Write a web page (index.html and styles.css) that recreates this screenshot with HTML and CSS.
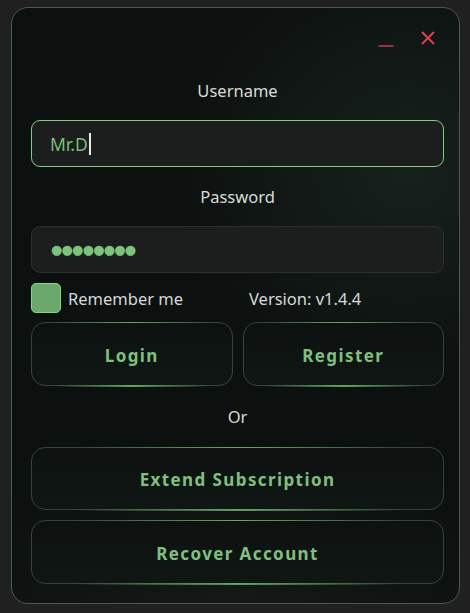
FILE: index.html
```html
<!DOCTYPE html>
<html>
<head>
<meta charset="utf-8">
<link rel="stylesheet" href="styles.css">
</head>
<body>
<div class="window">
  <div class="titlebar">
    <svg class="icon-min" width="16" height="16" viewBox="0 0 16 16"><line x1="0.5" y1="15" x2="15.5" y2="15" stroke="#b43a4a" stroke-width="1.6"/></svg>
    <svg class="icon-close" width="14" height="14" viewBox="0 0 14 14"><path d="M1 1 L13 13 M13 1 L1 13" stroke="#d83c50" stroke-width="2.2" stroke-linecap="butt"/></svg>
  </div>
  <div class="label">Username</div>
  <div class="input focused"><span class="value">Mr.D</span><span class="caret"></span></div>
  <div class="label label-pw">Password</div>
  <div class="input"><span class="dots">●●●●●●●●</span></div>
  <div class="options">
    <div class="check"><span class="box"></span><span class="check-text">Remember me</span></div>
    <div class="version">Version: v1.4.4</div>
  </div>
  <div class="btn-row">
    <div class="btn">Login</div>
    <div class="btn">Register</div>
  </div>
  <div class="or">Or</div>
  <div class="btn wide">Extend Subscription</div>
  <div class="btn wide second">Recover Account</div>
</div>
</body>
</html>
```
FILE: styles.css
```css
* { box-sizing: border-box; }
html, body { margin: 0; padding: 0; }
body {
  background: #202020;
  width: 470px;
  height: 613px;
  overflow: hidden;
  font-family: "Noto Sans", "Open Sans", sans-serif;
}
.window {
  margin: 7px 10px 0 11px;
  width: 449px;
  height: 597px;
  border: 1px solid #4b5a4f;
  border-radius: 17px;
  padding: 0 15px 0 19px;
  display: flex;
  flex-direction: column;
  background:
    radial-gradient(ellipse 240px 220px at 395px 160px, rgba(30, 44, 37, 0.6), rgba(20, 30, 25, 0) 100%),
    radial-gradient(ellipse 300px 160px at 220px 600px, rgba(28, 34, 31, 0.5), rgba(20, 24, 22, 0) 100%),
    #0c100f;
}
.titlebar {
  height: 73px;
  display: flex;
  justify-content: flex-end;
  align-items: flex-start;
  padding-top: 23px;
  padding-right: 9px;
}
.icon-min { margin-right: 27px; display: block; }
.icon-close { display: block; }
.label {
  text-align: center;
  color: #d9dcd9;
  font-size: 16.5px;
  line-height: 20px;
  height: 20px;
  margin-bottom: 19px;
}
.label-pw { margin-top: 20px; }
.input {
  height: 47px;
  border-radius: 9px;
  background: #1b1e1c;
  border: 1px solid #2c312d;
  display: flex;
  align-items: center;
  padding-left: 19px;
}
.input.focused {
  border: 1.6px solid #7fcf80;
  padding-left: 18px;
}
.value {
  color: #7dbb7d;
  font-size: 17.5px;
}
.caret {
  display: inline-block;
  width: 2px;
  height: 22px;
  background: #e8e8e8;
  margin-left: 1px;
}
.dots {
  color: #7cc47d;
  font-size: 13px;
  letter-spacing: -0.8px;
  font-family: "DejaVu Sans", sans-serif;
}
.options {
  margin-top: 10px;
  height: 30px;
  display: flex;
  align-items: center;
}
.check { display: flex; align-items: center; width: 218px; }
.box {
  width: 30px;
  height: 30px;
  border-radius: 5px;
  background: #6aa86c;
  border: 1.5px solid #86d487;
  margin-right: 7px;
}
.check-text, .version {
  color: #d6d9d6;
  font-size: 16.5px;
  line-height: 20px;
  padding-top: 1px;
}
.btn-row {
  margin-top: 9px;
  display: flex;
  gap: 10px;
}
.btn {
  position: relative;
  flex: 1;
  height: 64px;
  border-radius: 14px;
  border: 1.5px solid #36433a;
  background: linear-gradient(180deg, #0d1210 0%, #101614 100%);
  display: flex;
  align-items: center;
  justify-content: center;
  padding-top: 2px;
  color: #7fc080;
  font-weight: 700;
  font-size: 17px;
  letter-spacing: 1.4px;
}
.btn::before, .btn::after {
  content: "";
  position: absolute;
  left: 10%;
  right: 10%;
  height: 1.5px;
  background: linear-gradient(90deg, rgba(110,180,112,0), rgba(120,200,122,0.75), rgba(110,180,112,0));
}
.btn::before { top: -1.5px; }
.btn::after { bottom: -1.5px; }
.or {
  margin-top: 21px;
  text-align: center;
  color: #d9dcd9;
  font-size: 16.5px;
  line-height: 20px;
  height: 20px;
}
.wide { flex: none; margin-top: 20px; height: 63px; }
.wide.second { margin-top: 10px; height: 64px; }
```
